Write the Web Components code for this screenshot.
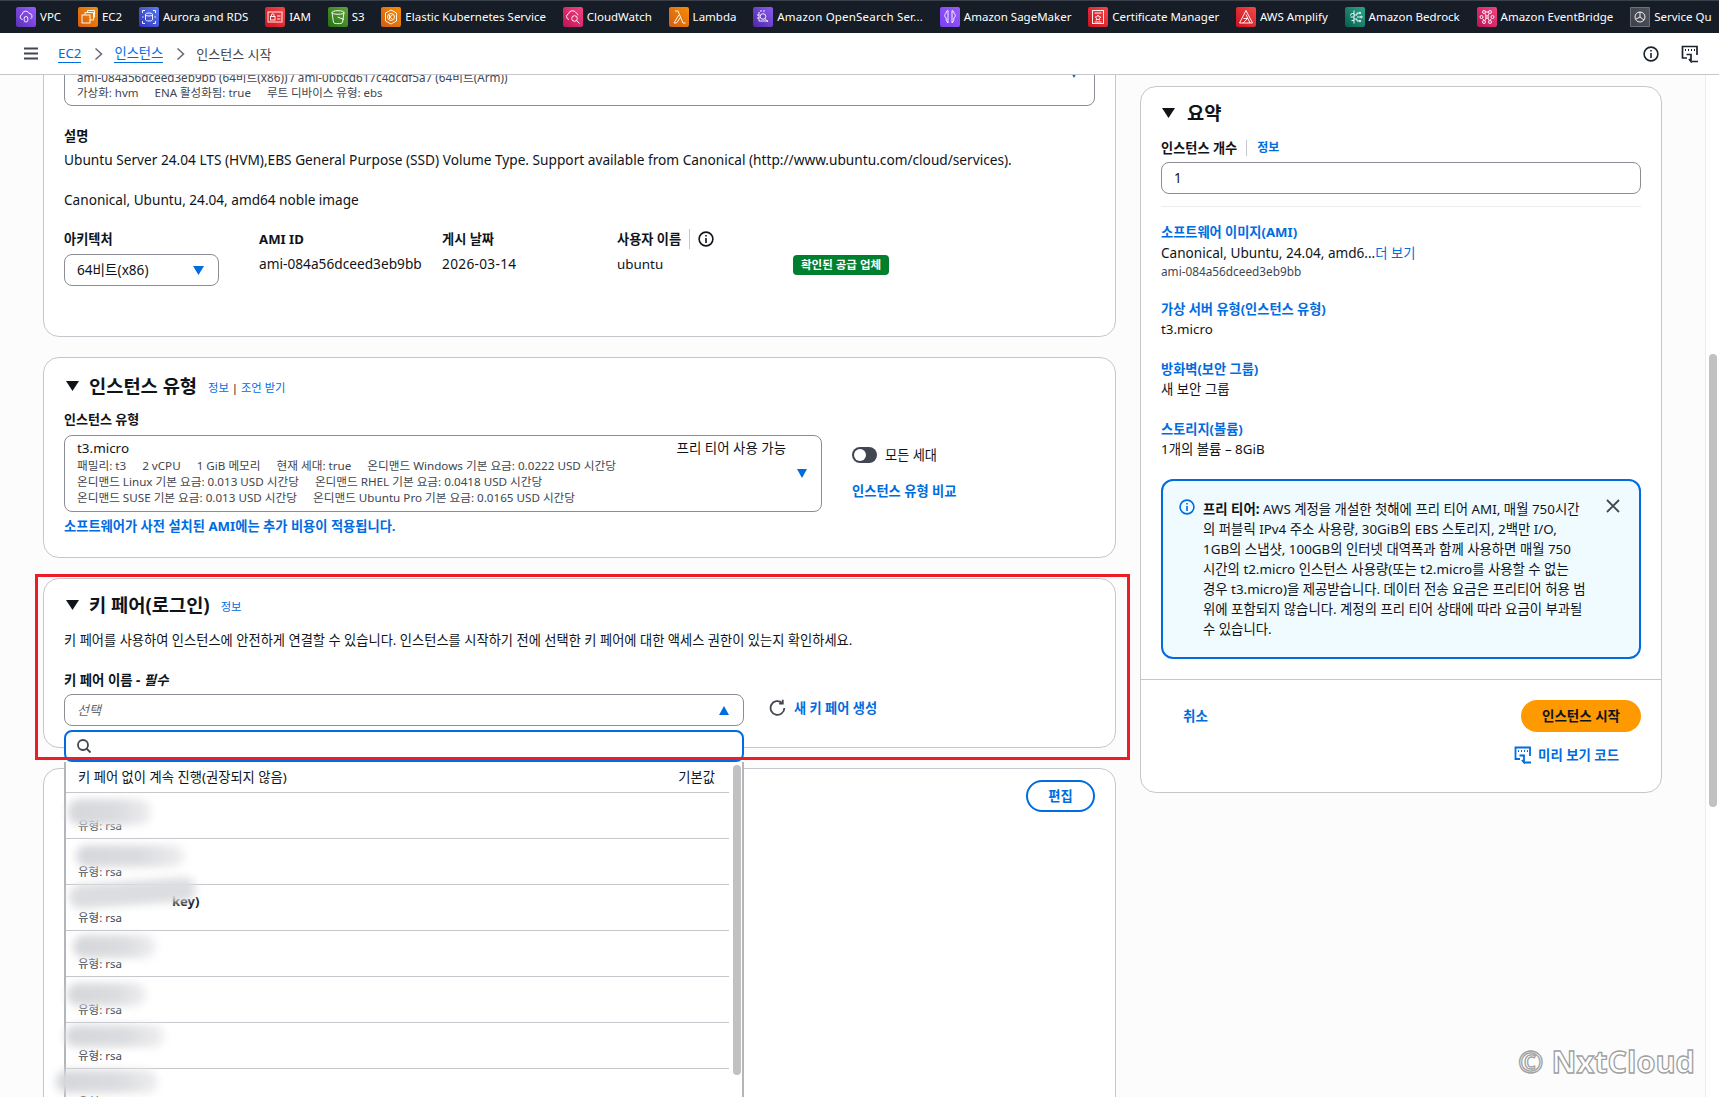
<!DOCTYPE html>
<html lang="ko">
<head>
<meta charset="utf-8">
<title>인스턴스 시작</title>
<style>
html,body{margin:0;padding:0;height:100%;overflow:hidden}
body{font-family:"Noto Sans","Noto Sans CJK KR",sans-serif;font-size:13.3px;line-height:20px;color:#0f141a;background:#fcfcfd}
</style>
</head>
<body>
<aws-page>
  <aws-topnav slot="nav">
    <nav-item c1="#9a5cff" c2="#5a30b5" icon="vpc">VPC</nav-item>
    <nav-item c1="#f78e04" c2="#d05c17" icon="ec2">EC2</nav-item>
    <nav-item c1="#5a7cf5" c2="#3334b9" icon="rds">Aurora and RDS</nav-item>
    <nav-item c1="#f54749" c2="#c7131f" icon="iam">IAM</nav-item>
    <nav-item c1="#60a337" c2="#277116" icon="s3">S3</nav-item>
    <nav-item c1="#f78e04" c2="#d05c17" icon="eks">Elastic Kubernetes Service</nav-item>
    <nav-item c1="#f34482" c2="#bc1356" icon="cw">CloudWatch</nav-item>
    <nav-item c1="#f78e04" c2="#d05c17" icon="lambda">Lambda</nav-item>
    <nav-item c1="#8c5cf0" c2="#4d27a8" icon="os" style="letter-spacing:.2px">Amazon OpenSearch Ser...</nav-item>
    <nav-item c1="#9a5cff" c2="#7a3ff0" icon="sm">Amazon SageMaker</nav-item>
    <nav-item c1="#f54749" c2="#c7131f" icon="cert">Certificate Manager</nav-item>
    <nav-item c1="#f54749" c2="#c7131f" icon="amp">AWS Amplify</nav-item>
    <nav-item c1="#2ea58b" c2="#055f4e" icon="bed">Amazon Bedrock</nav-item>
    <nav-item c1="#f34482" c2="#bc1356" icon="eb">Amazon EventBridge</nav-item>
    <nav-item c1="#50555f" c2="#3a3f49" icon="sq">Service Qu</nav-item>
  </aws-topnav>
  <aws-breadcrumbs slot="crumbs"></aws-breadcrumbs>

  <ami-card slot="left"></ami-card>
  <type-card slot="left"></type-card>
  <key-card slot="left"></key-card>
  <network-card slot="left"></network-card>

  <summary-card slot="right"></summary-card>
  <page-scrollbar slot="bar"></page-scrollbar>
  <water-mark slot="mark">© NxtCloud</water-mark>
</aws-page>

<script>
const BLUE='#006ce0';
const base=`:host,*{box-sizing:border-box}
a{color:${BLUE};text-decoration:none}
.sec{color:#424650}
.b{font-weight:700}`;
const tri=(c='#0f141a',w=13,h=10)=>`<svg width="${w}" height="${h}" viewBox="0 0 12 10" preserveAspectRatio="none" style="display:block;flex:none"><path d="M0 0H12L6 10Z" fill="${c}"/></svg>`;
const triUp=(c=BLUE,w=10,h=9)=>`<svg width="${w}" height="${h}" viewBox="0 0 12 10" preserveAspectRatio="none" style="display:block;flex:none"><path d="M0 10H12L6 0Z" fill="${c}"/></svg>`;
const infoI=(c='#0f141a',s=16)=>`<svg width="${s}" height="${s}" viewBox="0 0 16 16" fill="none" stroke="${c}" stroke-width="1.6" style="display:block;flex:none"><circle cx="8" cy="8" r="6.9"/><path d="M8 7v5M8 4v1.6"/></svg>`;
const def=(name,css,html)=>{
  customElements.define(name,class extends HTMLElement{
    constructor(){super();
      const r=this.attachShadow({mode:'open'});
      r.innerHTML=`<style>${base}${css}</style>${typeof html==='function'?html(this):html}`;
    }
  });
};

/* icons in the top navigation */
const navIcons={
 vpc:'<path d="M6.5 12.5a2.6 2.6 0 0 1-.4-5.1A3.6 3.6 0 0 1 13 6.3a3 3 0 0 1 1.5 5.6"/><rect x="8.2" y="9.5" width="3.6" height="5.5" rx="1.8"/>',
 ec2:'<rect x="4" y="8" width="8" height="8"/><path d="M7 8V5.5h8.5V13H12M9.5 5.5V3.5H16.5V10.5"/>',
 rds:'<ellipse cx="10" cy="7.5" rx="3.5" ry="1.5"/><path d="M6.5 7.5v5c0 2 7 2 7 0v-5M3.5 6V3.5H6M14 3.5h2.5V6M16.5 14v2.5H14M6 16.5H3.5V14M3 10h1.5M15.5 10H17"/>',
 iam:'<rect x="3" y="5" width="14" height="10"/><rect x="5.5" y="9.5" width="4.5" height="3.5"/><path d="M6.5 9.5V8a1.2 1.2 0 0 1 2.5 0v1.500M12 9h3.500M12 12h3.500"/>',
 s3:'<ellipse cx="10" cy="5.500" rx="6" ry="1.800"/><path d="M4 5.500 5.500 15.500c.300 1.500 8.700 1.500 9 0L16 5.500M9.500 10l6.500 2.500"/>',
 eks:'<path d="M10 3 15.500 6v8L10 17 4.500 14V6z"/><circle cx="10" cy="10" r="3.500"/><path d="M8.500 8v4M8.500 10l3-2M8.500 10l3 2"/>',
 cw:'<path d="M6 12.500a3 3 0 0 1-.4-5.800A4 4 0 0 1 13 5.800a3.200 3.200 0 0 1 2 2.400"/><circle cx="11.500" cy="11.500" r="2.800"/><path d="M13.500 13.500 16.500 16.500"/>',
 lambda:'<path d="M6 4h3l5 12h2.500M9.800 8 5 16h2.500l3.800-5.500"/>',
 os:'<circle cx="10" cy="9.500" r="2.800"/><path d="M12 11.500 15 15M6 5v9h9M8 3v2M11 3v2M4 8h2M4 11h2"/>',
 sm:'<path d="M8 3.500c-2 .500-2 2.500-2 3-1.500.500-2 3.500 0 4 0 2 .500 4.500 2 5.500V3.500zM12 3.500c2 .500 2 2.500 2 3 1.500.500 2 3.500 0 4 0 2-.500 4.500-2 5.500V3.500z"/>',
 cert:'<rect x="4.500" y="3.500" width="11" height="13"/><path d="M6.500 6h7M10 8l1 1.800 1.800.2-1.300 1.300.3 1.800-1.800-.9-1.800.9.300-1.800L7.200 10l1.800-.2zM6.500 15h7"/>',
 amp:'<path d="M10 3.500 16.500 16h-13zM10 7.500 14 16M7.500 11.500h4L7 16"/>',
 bed:'<path d="M9 3.500v13M9 6.500H7.500a2 2 0 0 0-2 2M9 10H5.500M9 13.500H6.500M12 6h2.500M12 10h4M12 14h2.500M9 8h3v-2M9 12h3v2"/><circle cx="15" cy="6" r=".8"/><circle cx="16.500" cy="10" r=".8"/><circle cx="15" cy="14" r=".8"/>',
 eb:'<circle cx="7" cy="5" r="1.500"/><circle cx="13" cy="5" r="1.500"/><circle cx="4.500" cy="10" r="1.500"/><circle cx="15.500" cy="10" r="1.500"/><circle cx="7" cy="15" r="1.500"/><circle cx="13" cy="15" r="1.500"/><circle cx="10" cy="10" r="1.300"/><path d="M8.500 5h3M6 12l1 1.500M14 12l-1 1.500M9 9 8 6.500M11 9l1-2.500M9 11l-1 2.500M11 11l1 2.500"/>',
 sq:'<circle cx="10" cy="10" r="5"/><path d="M10 5v5l4 3M10 10l-4 2"/>'
};

def('nav-item',`
:host{display:flex;align-items:center;flex:none;height:32px;margin-right:16.800px;color:#fff;font-size:11.5px;white-space:nowrap}
.ic{width:20px;height:20px;border-radius:2px;display:block;margin-right:4px;flex:none}
:host([icon=sq]) .ic{outline:1px solid #6b707b;outline-offset:-1px;border-radius:1px}
`,h=>{const a=h.getAttribute('c1'),b=h.getAttribute('c2'),i=h.getAttribute('icon');
 return `<svg class="ic" viewBox="0 0 20 20" style="background:linear-gradient(45deg,${b},${a})" fill="none" stroke="#fff" stroke-width="1" stroke-opacity=".92">${navIcons[i]}</svg><slot></slot>`});

def('aws-topnav',`
:host{display:flex;align-items:center;height:33px;padding-left:16px;background:#161d26;border-top:1px solid #3a404a;overflow:hidden;flex:none}
`,`<slot></slot>`);

def('aws-breadcrumbs',`
:host{display:flex;align-items:center;height:42px;background:#fff;border-bottom:1px solid #c6c6cd;flex:none;padding:0 20px 0 24px;font-size:13.300px;position:relative;z-index:3}
.burger{width:14px;height:13px;margin-right:20px;display:block}
a{border-bottom:1px solid ${BLUE};line-height:18px}
.ch{margin:0 11px 0 13px;display:block}
.cur{color:#424650;font-size:13px}
.sp{flex:1}
.pv{margin-left:22px;display:block}
`,`<svg class="burger" viewBox="0 0 14 13" stroke="#424650" stroke-width="2"><path d="M0 1.500H14M0 6.500H14M0 11.500H14"/></svg>
<a>EC2</a>
<svg class="ch" width="9" height="14" viewBox="0 0 9 14" fill="none" stroke="#656871" stroke-width="1.500"><path d="M1.500 1.500 7.500 7 1.500 12.500"/></svg>
<a>인스턴스</a>
<svg class="ch" width="9" height="14" viewBox="0 0 9 14" fill="none" stroke="#656871" stroke-width="1.500"><path d="M1.500 1.500 7.500 7 1.500 12.500"/></svg>
<span class="cur">인스턴스 시작</span><span class="sp"></span>
${infoI('#1b232d',16)}
<svg class="pv" width="18" height="18" viewBox="0 0 18 18" fill="none" stroke="#1b232d" stroke-width="1.700"><path d="M6 13H1.500V1.500H16V10"/><path d="M4 5h1M7 5h1M10 5h1M13 5h1" stroke-width="2"/><path d="M5.500 9.500H10v7l-2-2.500M11 16.500h6"/></svg>`);

def('aws-page',`
:host{display:flex;flex-direction:column;height:1097px;width:1719px;overflow:hidden;position:relative}
.main{flex:1;display:flex;min-height:0;overflow:hidden;position:relative}
.left{width:1073px;margin-left:43px;display:flex;flex-direction:column;gap:20px;flex:none;margin-top:-67px}
.right{width:522px;margin-left:24px;padding-top:11px;flex:none}
.bar{margin-left:auto;height:100%;display:flex}
`,`<slot name="nav"></slot><slot name="crumbs"></slot>
<div class="main"><div class="left"><slot name="left"></slot></div><div class="right"><slot name="right"></slot></div><div class="bar"><slot name="bar"></slot></div><slot name="mark"></slot></div>`);

const card=`:host{display:block;background:#fff;border:1px solid #c6c6cd;border-radius:16px;padding:0 20px;flex:none;position:relative}`;
const hd=`.hd{display:flex;align-items:center;height:28px;padding-left:2px}
.hd h2{margin:0 11px 0 10px;font-size:18.700px;line-height:28px;font-weight:700}
.hd .l{font-size:11.300px;line-height:16px;margin-top:3px}`;

def('ami-card',card+`
:host{height:329px}
.box{height:97px;border:1px solid #8c8c94;border-radius:0 0 8px 8px;padding:59px 12px 0;font-size:11.700px;line-height:16px;color:#424650;position:relative}
.box .ln{display:block;white-space:nowrap}
.box .g{font-size:11.500px}
.box .g span+span{margin-left:16px}
.box .a{position:absolute;right:16px;top:61px}
.lbl{font-weight:700;font-size:13.200px}
p{margin:0}
p.t{font-size:13.620px;line-height:20px}
.meta{display:grid;grid-template-columns:195px 183px 175px 176px auto;margin-top:18px}
.meta .lbl{display:flex;align-items:center;height:22px}
.sel{width:155px;height:32px;border:1px solid #8c8c94;border-radius:8px;display:flex;align-items:center;justify-content:space-between;padding:0 14px 0 12px;margin-top:4px;font-size:13.600px}
.v{margin-top:3px;height:32px;line-height:22px;font-size:13.700px}
.date{letter-spacing:.3px}
.badge{display:inline-block;background:#00802f;color:#fff;font-size:11.500px;font-weight:700;line-height:20px;height:20px;padding:0 8px;border-radius:4px;white-space:nowrap;margin-top:1px}
.sepi{border-left:1px solid #c6c6cd;height:20px;margin:0 8px}
`,`<div class="box"><span class="ln">ami-084a56dceed3eb9bb (64비트(x86)) / ami-0bbcd617c4dcdf5a7 (64비트(Arm))</span><span class="ln g"><span>가상화: hvm</span><span>ENA 활성화됨: true</span><span>루트 디바이스 유형: ebs</span></span><i class="a">${tri(BLUE,8,7)}</i></div>
<p class="lbl" style="margin-top:20px">설명</p>
<p class="t" style="margin-top:4px;font-size:13.680px">Ubuntu Server 24.04 LTS (HVM),EBS General Purpose (SSD) Volume Type. Support available from Canonical (http://www.ubuntu.com/cloud/services).</p>
<p class="t" style="margin-top:20px">Canonical, Ubuntu, 24.04, amd64 noble image</p>
<div class="meta">
 <div><div class="lbl">아키텍처</div><div class="sel"><span>64비트(x86)</span>${tri(BLUE,11,9)}</div></div>
 <div><div class="lbl">AMI ID</div><div class="v">ami-084a56dceed3eb9bb</div></div>
 <div><div class="lbl">게시 날짜</div><div class="v date">2026-03-14</div></div>
 <div><div class="lbl">사용자 이름<i class="sepi"></i>${infoI()}</div><div class="v" style="font-size:13.400px">ubuntu</div></div>
 <div><div class="lbl"></div><div class="v"><span class="badge">확인된 공급 업체</span></div></div>
</div>`);

def('type-card',card+hd+`
:host{height:201px;padding-top:14px}
.lbl{font-weight:700;margin-top:9px;font-size:13px}
.row{display:flex;margin-top:6px}
.box{width:758px;height:77px;border:1px solid #8c8c94;border-radius:8px;padding:3px 12px;position:relative;flex:none}
.t{display:flex;justify-content:space-between;padding-right:23px;line-height:19px;font-size:13.450px}
.s{font-size:11.650px;line-height:16px;color:#424650;white-space:nowrap;display:block}
.s span+span{margin-left:16px}
.a{position:absolute;right:14px;top:33px}
.opt{margin-left:30px}
.tg{display:flex;align-items:center;margin-top:10px;gap:8px;font-size:13.200px}
.sw{width:25px;height:16px;border-radius:8px;background:#424650;position:relative;display:block}
.sw::after{content:"";position:absolute;left:2px;top:2px;width:12px;height:12px;border-radius:50%;background:#fff}
.cmp{display:block;margin-top:16px;font-weight:700;font-size:13.260px}
.foot{display:block;margin-top:4px;font-weight:700;font-size:13.260px}
`,`<div class="hd">${tri()}<h2>인스턴스 유형</h2><span class="l"><a>정보</a> | <a>조언 받기</a></span></div>
<div class="lbl">인스턴스 유형</div>
<div class="row"><div class="box">
 <div class="t"><span>t3.micro</span><span>프리 티어 사용 가능</span></div>
 <span class="s"><span>패밀리: t3</span><span>2 vCPU</span><span>1 GiB 메모리</span><span>현재 세대: true</span><span>온디맨드 Windows 기본 요금: 0.0222 USD 시간당</span></span>
 <span class="s"><span>온디맨드 Linux 기본 요금: 0.013 USD 시간당</span><span>온디맨드 RHEL 기본 요금: 0.0418 USD 시간당</span></span>
 <span class="s"><span>온디맨드 SUSE 기본 요금: 0.013 USD 시간당</span><span>온디맨드 Ubuntu Pro 기본 요금: 0.0165 USD 시간당</span></span>
 <i class="a">${tri(BLUE,10,9)}</i>
</div><div class="opt"><div class="tg"><i class="sw"></i><span>모든 세대</span></div><a class="cmp">인스턴스 유형 비교</a></div></div>
<a class="foot">소프트웨어가 사전 설치된 AMI에는 추가 비용이 적용됩니다.</a>`);

def('key-row',`
:host{display:block;height:46px;border-bottom:1px solid #c6c6cd;padding:25px 0 0 12px;font-size:11.500px;line-height:16px;color:#424650;white-space:nowrap}
`,`<slot></slot>`);

def('blur-patch',`
:host{position:absolute;display:block;background:linear-gradient(90deg,#d6d7da 0%,#dbdcdf 60%,#eeeef0 100%);filter:blur(4px);border-radius:12px}
`,``);

def('key-dropdown',`
:host{position:absolute;left:20px;top:151px;width:680px;z-index:2;display:block}
.search{height:32px;border:2px solid ${BLUE};border-radius:8px;background:#fff;display:flex;align-items:center;padding-left:10px}
.panel{position:relative;height:345px;background:#fff;border-left:2px solid #b4b4bb;border-right:2px solid #b4b4bb;padding-right:13px}
.panel .first{height:31px;border-bottom:1px solid #c6c6cd;display:flex;justify-content:space-between;align-items:center;padding:0 14px 0 12px;white-space:nowrap;font-size:13.300px}
.th{position:absolute;right:1px;top:3px;width:8px;height:310px;background:#c1c1c1;border-radius:4px}
.key{position:absolute;left:106px;top:132px;font-size:13px;font-weight:700;line-height:14px}
`,`<div class="search"><svg width="16" height="16" viewBox="0 0 16 16" fill="none" stroke="#424650" stroke-width="1.800"><circle cx="7" cy="7" r="5"/><path d="M10.500 10.500 14.500 14.500"/></svg></div>
<div class="panel">
 <div class="first"><span>키 페어 없이 계속 진행(권장되지 않음)</span><span>기본값</span></div>
 <key-row>유형: rsa</key-row><key-row>유형: rsa</key-row><key-row>유형: rsa</key-row><key-row>유형: rsa</key-row><key-row>유형: rsa</key-row><key-row>유형: rsa</key-row><key-row>유형: rsa</key-row>
 <span class="key">key)</span>
 <blur-patch style="left:2px;top:37px;width:83px;height:26px"></blur-patch>
 <blur-patch style="left:10px;top:83px;width:108px;height:22px"></blur-patch>
 <blur-patch style="left:3px;top:119px;width:127px;height:24px;background:#dcdde0;transform:rotate(-4deg)"></blur-patch>
 <blur-patch style="left:7px;top:173px;width:83px;height:23px"></blur-patch>
 <blur-patch style="left:1px;top:221px;width:79px;height:23px"></blur-patch>
 <blur-patch style="left:-1px;top:263px;width:99px;height:22px"></blur-patch>
 <blur-patch style="left:-10px;top:308px;width:102px;height:23px"></blur-patch>
 <div class="th"></div>
</div>`);

def('key-card',card+hd+`
:host{height:170px;padding-top:12px;z-index:2}
.desc{margin:11px 0 0;font-size:13.250px;line-height:20px;white-space:nowrap}
.lbl{font-weight:700;margin-top:20px;font-size:13.400px}
.row{display:flex;align-items:center;margin-top:4px}
.sel{width:680px;height:32px;border:1px solid #8c8c94;border-radius:8px;display:flex;align-items:center;justify-content:space-between;padding:0 14px 0 12px;color:#656871;font-style:italic;font-size:13px;flex:none}
.new{display:flex;align-items:center;margin-left:25px;gap:7px;font-weight:700;font-size:13.200px;margin-top:-4px}
.red{position:absolute;left:-9px;right:-15px;top:-5px;bottom:-13px;border:3px solid #ee1c25;z-index:3;pointer-events:none}
`,`<div class="hd">${tri()}<h2>키 페어(로그인)</h2><span class="l"><a>정보</a></span></div>
<p class="desc">키 페어를 사용하여 인스턴스에 안전하게 연결할 수 있습니다. 인스턴스를 시작하기 전에 선택한 키 페어에 대한 액세스 권한이 있는지 확인하세요.</p>
<div class="lbl">키 페어 이름 - <i>필수</i></div>
<div class="row"><div class="sel"><span>선택</span>${triUp()}</div>
<div class="new"><svg width="18" height="18" viewBox="0 0 17 17" fill="none" stroke="#424650" stroke-width="1.700"><path d="M14.500 8.500a6.500 6.500 0 1 1-2.200-4.900"/><path d="M13 .800v3.500H9.500"/></svg><a>새 키 페어 생성</a></div></div>
<key-dropdown></key-dropdown>
<div class="red"></div>`);

def('network-card',card+`
:host{height:420px}
.btn{position:absolute;right:20px;top:11px;width:69px;height:32px;border:2px solid ${BLUE};border-radius:20px;color:${BLUE};font-weight:700;font-size:13.300px;display:flex;align-items:center;justify-content:center}
`,`<div class="btn">편집</div>`);

def('summary-card',card+hd+`
:host{height:707px;padding:0}
.in{padding:12px 20px 0}
.hd{padding-left:1px}
.hd h2{margin-left:12px}
.lb{display:flex;align-items:center;margin-top:11px;height:20px;font-weight:700;font-size:13.200px}
.lb i{border-left:1px solid #c6c6cd;height:16px;margin:0 10px 0 9px}
.lb a{font-size:12px}
.inp{height:32px;border:1px solid #8c8c94;border-radius:8px;margin-top:4px;padding:0 12px;line-height:30px;font-size:13.500px}
hr{border:0;border-top:1px solid #ebebf0;margin:12px 0 0}
.it{margin-top:20px}
.it.f{margin-top:15px}
.it a{font-weight:700;display:block;line-height:20px;font-size:13.200px}
.it div{line-height:20px;font-size:13.400px}
.it.f div{margin-top:1px;font-size:13.580px}
.it small{display:block;font-size:11.800px;line-height:16px;color:#424650}
.it a.m{display:inline;font-weight:400;font-size:13.300px}
.info{height:180px;margin-top:20px;border:2px solid ${BLUE};border-radius:12px;background:#f0fbff;padding:18px 14px 0 16px;display:flex;position:relative;font-size:13.380px;white-space:nowrap}
.info .tx{margin-left:8px;line-height:20px}
.x{position:absolute;right:19px;top:18px}
.ft{border-top:1px solid #c6c6cd;margin-top:20px;position:relative;padding:20px 20px 0}
.ftr{display:flex;justify-content:space-between;align-items:center;padding-left:22px}
.go{width:120px;height:32px;border-radius:16px;background:#f90;font-weight:700;display:flex;align-items:center;justify-content:center;font-size:13.500px}
.c{font-weight:700;font-size:13.500px}
.pv{display:flex;justify-content:flex-end;align-items:center;margin:13px 22px 0 0;gap:6px;font-weight:700;font-size:13.400px}
`,`<div class="in"><div class="hd">${tri()}<h2>요약</h2></div>
<div class="lb">인스턴스 개수<i></i><a>정보</a></div>
<div class="inp">1</div>
<hr>
<div class="it f"><a>소프트웨어 이미지(AMI)</a><div>Canonical, Ubuntu, 24.04, amd6...<a class="m">더 보기</a></div><small>ami-084a56dceed3eb9bb</small></div>
<div class="it"><a>가상 서버 유형(인스턴스 유형)</a><div>t3.micro</div></div>
<div class="it"><a>방화벽(보안 그룹)</a><div>새 보안 그룹</div></div>
<div class="it"><a>스토리지(볼륨)</a><div>1개의 볼륨 – 8GiB</div></div>
<div class="info">${infoI(BLUE,16)}<div class="tx"><span class="b">프리 티어:</span> AWS 계정을 개설한 첫해에 프리 티어 AMI, 매월 750시간<br>의 퍼블릭 IPv4 주소 사용량, 30GiB의 EBS 스토리지, 2백만 I/O,<br>1GB의 스냅샷, 100GB의 인터넷 대역폭과 함께 사용하면 매월 750<br>시간의 t2.micro 인스턴스 사용량(또는 t2.micro를 사용할 수 없는<br>경우 t3.micro)을 제공받습니다. 데이터 전송 요금은 프리티어 허용 범<br>위에 포함되지 않습니다. 계정의 프리 티어 상태에 따라 요금이 부과될<br>수 있습니다.</div>
<svg class="x" width="14" height="14" viewBox="0 0 14 14" stroke="#424650" stroke-width="1.800"><path d="M1 1 13 13M13 1 1 13"/></svg></div></div>
<div class="ft"><div class="ftr"><a class="c">취소</a><div class="go">인스턴스 시작</div></div>
<div class="pv"><svg width="18" height="18" viewBox="0 0 18 18" fill="none" stroke="${BLUE}" stroke-width="1.800"><path d="M6 13H1.500V1.500H16V10"/><path d="M4 5h1M7 5h1M10 5h1M13 5h1" stroke-width="2"/><path d="M5.500 9.500H10v7l-2-2.500M11 16.500h6"/></svg><a>미리 보기 코드</a></div></div>`);

def('page-scrollbar',`
:host{display:block;width:14px;height:100%;background:#fff;border-left:1px solid #ebebf0;padding:279px 2px 0 3px}
div{height:453px;background:#c1c1c1;border-radius:5px}
`,`<div></div>`);

def('water-mark',`
:host{position:absolute;left:1518px;top:964px;font-family:"Open Sans",sans-serif;font-weight:700;font-size:30.700px;line-height:44px;color:#fff;-webkit-text-stroke:1.300px #a0a0a0;white-space:nowrap;z-index:5}
`,`<slot></slot>`);
</script>
</body>
</html>
